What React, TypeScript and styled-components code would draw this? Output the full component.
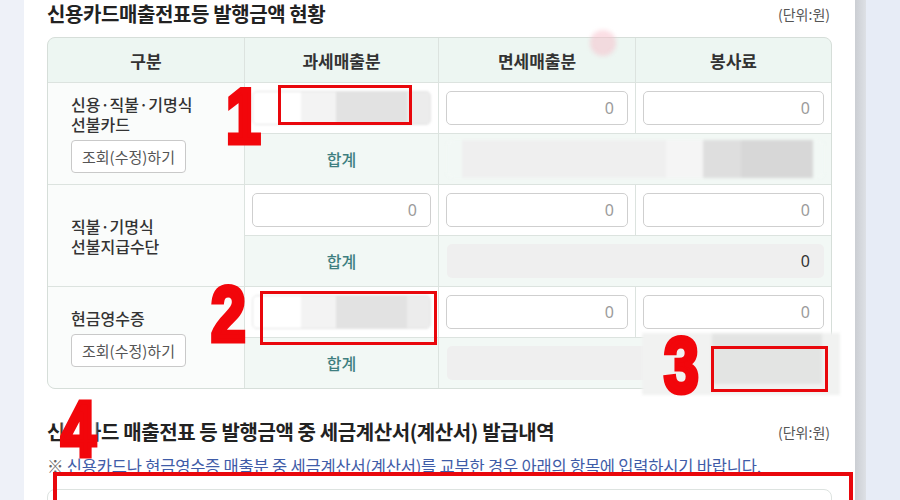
import { Fragment } from "react";
import styled, { css, createGlobalStyle } from "styled-components";

const GlobalStyle = createGlobalStyle`
  html, body {
    margin: 0;
    padding: 0;
  }
  body {
    font-family: "Noto Sans CJK KR", "Noto Sans", sans-serif;
    background: #eef1f8;
  }
`;

const Page = styled.div`
  position: relative;
  display: flex;
  width: 900px;
  height: 500px;
  overflow: hidden;
  background: #eef1f8;
`;

const Gutter = styled.div`
  width: 24px;
  flex: none;
`;

const Panel = styled.main`
  width: 831px;
  flex: none;
  box-sizing: border-box;
  padding: 0 23px;
  background: #fff;
`;

const ScrollEdge = styled.div`
  width: 11px;
  flex: none;
  background: linear-gradient(90deg, #cbced3, #dde0e5);
`;

const Backdrop = styled.div`
  flex: 1;
  background: #e7ecf6;
`;

const SectionHead = styled.div<{ $top: number }>`
  display: flex;
  justify-content: space-between;
  align-items: center;
  height: 28px;
  margin-top: ${(p) => p.$top}px;
  padding-right: 2px;
`;

const Title = styled.h2`
  margin: 0;
  font-size: 20px;
  line-height: 28px;
  font-weight: 700;
  color: #222;
  letter-spacing: -0.4px;
`;

const Unit = styled.span`
  font-size: 14px;
  color: #555;
`;

const Grid = styled.div`
  display: grid;
  grid-template-columns: 196px 193px 196px 1fr;
  grid-template-rows: 44px repeat(6, 50px);
  gap: 1px;
  margin-top: 9px;
  border: 1px solid #d6ded9;
  border-radius: 8px;
  overflow: hidden;
  background: #dce3df;
`;

const HeadCell = styled.div`
  display: flex;
  align-items: center;
  justify-content: center;
  background: #edf6f2;
  font-size: 17px;
  font-weight: 700;
  color: #333;
`;

const GroupLabel = styled.div`
  grid-row: span 2;
  display: flex;
  flex-direction: column;
  justify-content: center;
  align-items: flex-start;
  gap: 6px;
  padding-left: 23px;
  background: #fafcfb;
`;

const LabelText = styled.div`
  font-size: 16px;
  line-height: 20px;
  font-weight: 500;
  color: #333;
`;

const LookupButton = styled.button`
  height: 33px;
  padding: 0 10px;
  border: 1px solid #c9c9c9;
  border-radius: 4px;
  background: #fff;
  font-family: inherit;
  font-size: 15px;
  color: #555;
`;

const InputCell = styled.div`
  padding: 8px 7px;
  background: #fff;
`;

/* blurred-out values in the capture */
const redactInput = css`
  border-color: #e4e4e4;
  background: linear-gradient(90deg, #fff 0 27%, #f3f3f3 27% 47%, #e2e2e2 47% 87%, #ececec 87%);
  filter: blur(1px);
`;

const NumberInput = styled.input<{ $redact?: boolean }>`
  display: block;
  width: 100%;
  height: 34px;
  box-sizing: border-box;
  padding: 0 13px;
  border: 1px solid #cfcfcf;
  border-radius: 5px;
  background: #fff;
  font-family: "Noto Sans", sans-serif;
  font-size: 16px;
  color: #9b9b9b;
  text-align: right;
  ${(p) => p.$redact && redactInput}
`;

const SumLabel = styled.div`
  display: flex;
  align-items: center;
  justify-content: center;
  background: #f2f8f5;
  font-size: 16px;
  font-weight: 500;
  color: #3f7f80;
`;

const SumCell = styled.div`
  grid-column: span 2;
  padding: 8px 7px 8px 8px;
  background: #f2f8f5;
`;

const redactSum = css`
  height: 38px;
  margin-top: -2px;
  background: linear-gradient(90deg, #f2f8f5 0 4%, #efefef 4% 58%, #f5f5f5 58% 68%, #dedede 68% 78%, #d7d7d7 78% 97%, #f2f8f5 97%);
  filter: blur(1.5px);
`;

const SumBox = styled.div<{ $redact?: boolean }>`
  display: flex;
  align-items: center;
  justify-content: flex-end;
  height: 34px;
  padding-right: 14px;
  border-radius: 5px;
  background: #efefef;
  font-family: "Noto Sans", sans-serif;
  font-size: 16px;
  color: #333;
  ${(p) => p.$redact && redactSum}
`;

const Note = styled.p`
  margin: 10px 0 0;
  font-size: 16.5px;
  line-height: 20px;
  color: #3f5ca8;
  letter-spacing: -0.2px;
  white-space: nowrap;
`;

const NoteMark = styled.span`
  color: #666;
`;

const SubTable = styled.div`
  height: 80px;
  margin-top: 13px;
  border: 1px solid #dde3e0;
  border-radius: 8px;
`;

/* annotation layer drawn over the capture */
type Box = { $x: number; $y: number; $w: number; $h: number };

const Patch = styled.div<Box & { $bg: string }>`
  position: absolute;
  left: ${(p) => p.$x}px;
  top: ${(p) => p.$y}px;
  width: ${(p) => p.$w}px;
  height: ${(p) => p.$h}px;
  background: ${(p) => p.$bg};
  filter: blur(1.5px);
`;

const Mark = styled.div<Box & { $line?: number }>`
  position: absolute;
  left: ${(p) => p.$x}px;
  top: ${(p) => p.$y}px;
  width: ${(p) => p.$w}px;
  height: ${(p) => p.$h}px;
  box-sizing: border-box;
  border: ${(p) => p.$line ?? 3}px solid #e9070c;
`;

const Digit = styled.span<{ $x: number; $y: number }>`
  position: absolute;
  left: ${(p) => p.$x}px;
  top: ${(p) => p.$y - 8}px;
  font-family: "Liberation Sans", sans-serif;
  font-weight: 700;
  font-size: 78px;
  line-height: 1;
  color: #f2060b;
  -webkit-text-stroke: 5px #f2060b;
  transform: scaleX(0.8);
  transform-origin: 0 0;
`;

const Touch = styled.div`
  position: absolute;
  left: 590px;
  top: 30px;
  width: 26px;
  height: 26px;
  border-radius: 50%;
  background: rgba(248, 190, 202, 0.5);
  filter: blur(2px);
`;

const groups = [
  { label: ["신용·직불·기명식", "선불카드"], lookup: true, sum: "", redactSum: true },
  { label: ["직불·기명식", "선불지급수단"], lookup: false, sum: "0", redactSum: false },
  { label: ["현금영수증"], lookup: true, sum: "", redactSum: false },
];

const heads = ["구분", "과세매출분", "면세매출분", "봉사료"];

function App() {
  return (
    <Page>
      <GlobalStyle />
      <Gutter />
      <Panel>
        <SectionHead $top={0}>
          <Title>신용카드매출전표등 발행금액 현황</Title>
          <Unit>(단위:원)</Unit>
        </SectionHead>
        <Grid>
          {heads.map((h) => (
            <HeadCell key={h}>{h}</HeadCell>
          ))}
          {groups.map((g, i) => (
            <Fragment key={i}>
              <GroupLabel>
                <LabelText>
                  {g.label.map((t, n) => (
                    <Fragment key={t}>
                      {n > 0 && <br />}
                      {t}
                    </Fragment>
                  ))}
                </LabelText>
                {g.lookup && <LookupButton>조회(수정)하기</LookupButton>}
              </GroupLabel>
              {[0, 1, 2].map((c) => {
                const hidden = c === 0 && g.lookup;
                return (
                  <InputCell key={c}>
                    <NumberInput readOnly $redact={hidden} value={hidden ? "" : "0"} />
                  </InputCell>
                );
              })}
              <SumLabel>합계</SumLabel>
              <SumCell>
                <SumBox $redact={g.redactSum}>{g.sum}</SumBox>
              </SumCell>
            </Fragment>
          ))}
        </Grid>
        <SectionHead $top={29}>
          <Title>신용카드 매출전표 등 발행금액 중 세금계산서(계산서) 발급내역</Title>
          <Unit>(단위:원)</Unit>
        </SectionHead>
        <Note>
          <NoteMark>※</NoteMark> 신용카드나 현금영수증 매출분 중 세금계산서(계산서)를 교부한 경우 아래의 항목에 입력하시기 바랍니다.
        </Note>
        <SubTable />
      </Panel>
      <ScrollEdge />
      <Backdrop />

      <Touch />

      <Mark $x={278} $y={85} $w={134} $h={40} />
      <Digit $x={226} $y={85}>1</Digit>

      <Mark $x={260} $y={291} $w={177} $h={54} />
      <Digit $x={211} $y={283}>2</Digit>

      <Patch $x={642} $y={333} $w={198} $h={62} $bg="#f1f2f1" />
      <Patch $x={712} $y={334} $w={110} $h={50} $bg="#e3e4e3" />
      <Mark $x={711} $y={346} $w={117} $h={46} />
      <Digit $x={664} $y={334}>3</Digit>

      <Patch $x={63} $y={420} $w={33} $h={26} $bg="#fff" />
      <Digit $x={61} $y={398}>4</Digit>
      <Mark $x={53} $y={472} $w={800} $h={60} $line={4} />
    </Page>
  );
}

export default App;
